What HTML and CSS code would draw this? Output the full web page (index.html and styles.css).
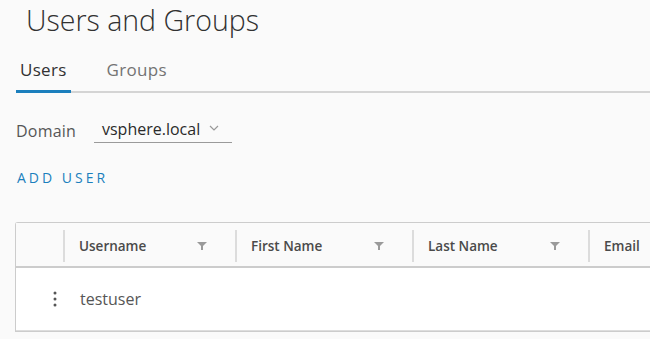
FILE: index.html
```html
<!DOCTYPE html>
<html lang="en">
    <head>
        <meta charset="UTF-8">
        <title>Users and Groups</title>
        <link rel="stylesheet" href="styles.css">
    </head>
    <body>
        <div class="page">
            <h1 class="title">Users and Groups</h1>

            <div class="tabs">
                <div class="tab active">Users</div>
                <div class="tab">Groups</div>
            </div>

            <div class="domain-row">
                <span class="domain-label">Domain</span>
                <div class="select">
                    <span>vsphere.local</span>
                    <svg class="chevron" width="10" height="6" viewBox="0 0 10 6">
                        <path d="M1 1 L5 5 L9 1" fill="none" stroke="#999" stroke-width="1.2"/>
                    </svg>
                </div>
            </div>

            <div class="add-user">ADD USER</div>

            <div class="grid">
                <div class="grid-head">
                    <div class="cell cell-action"></div>
                    <div class="cell col"><span>Username</span><svg class="filter" width="10" height="8" viewBox="0 0 10 8"><path d="M0 0 H10 L6 4 V8 H4 V4 Z" fill="#9a9a9a"/></svg></div>
                    <div class="cell col"><span>First Name</span><svg class="filter" width="10" height="8" viewBox="0 0 10 8"><path d="M0 0 H10 L6 4 V8 H4 V4 Z" fill="#9a9a9a"/></svg></div>
                    <div class="cell col"><span>Last Name</span><svg class="filter" width="10" height="8" viewBox="0 0 10 8"><path d="M0 0 H10 L6 4 V8 H4 V4 Z" fill="#9a9a9a"/></svg></div>
                    <div class="cell col"><span>Email</span></div>
                </div>
                <div class="grid-row">
                    <div class="cell cell-action">
                        <svg width="4" height="16" viewBox="0 0 4 16">
                            <circle cx="2" cy="2" r="1.5" fill="#555"/>
                            <circle cx="2" cy="8" r="1.5" fill="#555"/>
                            <circle cx="2" cy="14" r="1.5" fill="#555"/>
                        </svg>
                    </div>
                    <div class="cell">testuser</div>
                    <div class="cell"></div>
                    <div class="cell"></div>
                    <div class="cell"></div>
                </div>
            </div>
        </div>
    </body>
</html>
```

FILE: styles.css
```css
* {
    margin: 0; padding: 0; box-sizing: border-box;
}

html, body {
    width: 100%;
    height: 100%;
    background-color: #fafafa;
    color: #565656;
    font-family: "Open Sans", "Noto Sans", sans-serif;
    overflow: hidden;
}

.page {
    width: 650px;
    height: 339px;
    padding: 0 0 0 16px;
    overflow: hidden;
}

.title {
    font-size: 28.5px;
    font-weight: 300;
    color: #313131;
    line-height: 36px;
    margin: 2px 0 0 10px;
}

.tabs {
    display: flex;
    gap: 32px;
    margin-top: 21px;
    border-bottom: 2px solid #d4d4d4;
}

.tab {
    font-size: 17px;
    letter-spacing: 0.3px;
    line-height: 22px;
    color: #737373;
    padding: 0 4px 9px 4px;
    margin-bottom: -2px;
    border-bottom: 3px solid transparent;
}

.tab.active {
    color: #313131;
    border-bottom-color: #1b7fbd;
}

.domain-row {
    display: flex;
    align-items: flex-end;
    gap: 18px;
    margin-top: 25px;
}

.domain-label {
    font-size: 16px;
    line-height: 22px;
    letter-spacing: 0.2px;
    padding-bottom: 1px;
}

.select {
    display: flex;
    align-items: center;
    gap: 9px;
    width: 138px;
    padding: 0 0 2px 8px;
    border-bottom: 1px solid #9a9a9a;
    font-size: 16px;
    line-height: 22px;
    color: #2a2a2a;
}

.chevron {
    margin-bottom: 2px;
}

.add-user {
    margin-top: 26px;
    margin-left: 1px;
    font-size: 14px;
    line-height: 18px;
    letter-spacing: 3px;
    color: #1b7fbd;
}

.grid {
    margin-top: 35px;
    margin-left: -1px;
    width: 740px;
    border: 1px solid #cccccc;
    border-right: none;
    border-radius: 3px 0 0 0;
    background: #ffffff;
}

.grid-head, .grid-row {
    display: grid;
    grid-template-columns: 47px 172px 177px 176px 167px;
}

.grid-head {
    height: 45px;
    background: #fafafa;
    border-bottom: 2px solid #cccccc;
    font-size: 13.5px;
    font-weight: 600;
    color: #4a4a4a;
}

.grid-head .cell {
    display: flex;
    align-items: center;
    justify-content: space-between;
    padding: 0 28px 0 14px;
}

.grid-head .col {
    border-left: 2px solid #dcdcdc;
    margin: 7px 0 4px 0;
}

.grid-row {
    height: 63px;
    border-bottom: 1px solid #dddddd;
    font-size: 16px;
    color: #565656;
}

.grid-row .cell {
    display: flex;
    align-items: center;
    padding-left: 17px;
}

.grid-row .cell-action {
    justify-content: flex-end;
    padding: 0 6px 0 0;
}
```
